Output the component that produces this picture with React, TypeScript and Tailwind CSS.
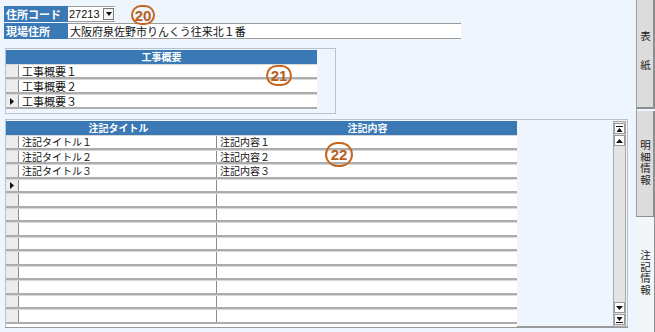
import type { ReactNode } from "react"

const jp = "font-['Noto_Sans_CJK_JP','Noto_Sans',sans-serif]"

function Marker({ on }: { on?: boolean }) {
  return (
    <div className="w-[13px] shrink-0 bg-[#ececec] border-r border-[#8c8c8c] flex items-center justify-center">
      {on && (
        <svg width="4" height="7" viewBox="0 0 4 7">
          <path d="M0 0 L4 3.5 L0 7 Z" fill="#111" />
        </svg>
      )}
    </div>
  )
}

function Circle({ n, className }: { n: string; className: string }) {
  return (
    <div
      className={`absolute flex items-center justify-center rounded-full border-[2.5px] border-[#c4661e] text-[#b85e1c] text-[15px] font-bold leading-none font-['Liberation_Sans',sans-serif] ${className}`}
    >
      {n}
    </div>
  )
}

function ScrollBtn({ children }: { children: ReactNode }) {
  return (
    <div className="h-[11px] w-[11px] mx-auto bg-white border border-[#9a9a9a] flex items-center justify-center">
      {children}
    </div>
  )
}

function Tab({ label, className, spacing }: { label: string; className: string; spacing: string }) {
  return (
    <div className={`flex items-center justify-center ${className}`}>
      <span className={`[writing-mode:vertical-rl] text-[10.5px] leading-[12px] text-[#222] ${spacing}`}>{label}</span>
    </div>
  )
}

export default function App() {
  const overview = ["工事概要１", "工事概要２", "工事概要３"]
  const notes = [
    ["注記タイトル１", "注記内容１"],
    ["注記タイトル２", "注記内容２"],
    ["注記タイトル３", "注記内容３"],
    ...Array.from({ length: 10 }, () => ["", ""]),
  ]

  return (
    <div className={`w-[655px] h-[332px] flex bg-[#eef5fc] overflow-hidden ${jp}`}>
      {/* main area */}
      <div className="relative w-[636px] h-[332px] pl-[4px] pt-[6px]">
        <div className="flex h-[16px]">
          <div className="w-[64px] bg-[#3b78b6] text-white text-[11px] font-bold leading-[16px] pl-[2px]">住所コード</div>
          <div className="w-[47px] bg-white border-y border-[#9c9c9c] flex items-center pl-[1px] text-[11px] text-[#111]">
            <span className="font-['Liberation_Sans',sans-serif] text-[11px]">27213</span>
            <div className="ml-auto mr-[1px] h-[12px] w-[11px] border border-[#777] bg-[#f4f4f4] flex items-center justify-center">
              <svg width="6" height="4" viewBox="0 0 6 4">
                <path d="M0 0 L6 0 L3 4 Z" fill="#111" />
              </svg>
            </div>
          </div>
        </div>
        <div className="flex h-[16px] mt-px">
          <div className="w-[64px] bg-[#3b78b6] text-white text-[11px] font-bold leading-[16px] pl-[2px]">現場住所</div>
          <div className="w-[393px] bg-white border-y border-[#9c9c9c] flex items-center pl-[2px] text-[#111]">
            <span className="text-[11px] leading-[12px]">大阪府泉佐野市りんくう往来北１番</span>
          </div>
        </div>

        {/* 工事概要 */}
        <div className="mt-[9px] ml-px w-[331px] h-[66px] border border-[#b9c3cc] pt-px">
          <div className="w-[311px] bg-white">
            <div className="h-[14px] bg-[#3b78b6] text-white text-[10px] font-bold leading-[14px] text-center">工事概要</div>
            {overview.map((t, i) => (
              <div key={i} className="flex h-[15px] border-b-2 border-[#adadad] border-t border-t-[#d8d8d8]">
                <Marker on={i === 2} />
                <div className="flex-1 text-[11px] leading-[12px] pl-[3px] text-[#111]">{t}</div>
              </div>
            ))}
          </div>
        </div>

        {/* 注記 */}
        <div className="mt-[5px] ml-px w-[623px] h-[209px] border border-[#b9c3cc] border-b-2 border-b-[#9a9a9a] pt-px flex">
          <div className="w-[511px] h-[206px] bg-white overflow-hidden">
            <div className="flex h-[14px] bg-[#3b78b6] text-white text-[10px] font-bold leading-[14px]">
              <div className="w-[13px]" />
              <div className="w-[199px] text-center">注記タイトル</div>
              <div className="flex-1 text-center">注記内容</div>
            </div>
            {notes.map(([a, b], i) => (
              <div key={i} className="flex h-[14.5px] border-b-2 border-[#adadad] border-t border-t-[#d8d8d8]">
                <Marker on={i === 3} />
                <div className="w-[198px] border-r border-[#8c8c8c] text-[10px] leading-[11px] pl-[3px] text-[#111]">{a}</div>
                <div className="flex-1 text-[10px] leading-[11px] pl-[3px] text-[#111]">{b}</div>
              </div>
            ))}
          </div>
          <div className="ml-auto mr-px w-[13px] h-[206px] bg-[#e4e4e4] border border-[#a8a8a8] flex flex-col justify-between py-px">
            <div className="flex flex-col gap-px">
              <ScrollBtn>
                <svg width="7" height="6" viewBox="0 0 7 6">
                  <path d="M0 0 H7 V1 H0 Z M3.5 2 L6.5 6 H0.5 Z" fill="#111" />
                </svg>
              </ScrollBtn>
              <ScrollBtn>
                <svg width="7" height="4" viewBox="0 0 7 4">
                  <path d="M3.5 0 L7 4 H0 Z" fill="#111" />
                </svg>
              </ScrollBtn>
            </div>
            <div className="flex flex-col gap-px">
              <ScrollBtn>
                <svg width="7" height="4" viewBox="0 0 7 4">
                  <path d="M0 0 H7 L3.5 4 Z" fill="#111" />
                </svg>
              </ScrollBtn>
              <ScrollBtn>
                <svg width="7" height="6" viewBox="0 0 7 6">
                  <path d="M0.5 0 H6.5 L3.5 4 Z M0 5 H7 V6 H0 Z" fill="#111" />
                </svg>
              </ScrollBtn>
            </div>
          </div>
        </div>

        <Circle n="20" className="left-[131px] top-[5px] w-[24px] h-[20px]" />
        <Circle n="21" className="left-[266px] top-[65px] w-[26px] h-[21px]" />
        <Circle n="22" className="left-[325px] top-[142px] w-[28px] h-[25px]" />
      </div>

      {/* tabs */}
      <div className="w-[19px] h-[332px] flex flex-col">
        <Tab label={"表\u3000紙"} spacing="tracking-[4px]" className="h-[109px] bg-[#dcdcdc] border-l border-l-[#a0a0a0] border-r-2 border-b-2 border-[#8e8e8e] pb-[2px]" />
        <div className="h-[2px] border-l border-[#a0a0a0]" />
        <Tab label="明細情報" spacing="tracking-[1px]" className="h-[106px] bg-[#dcdcdc] border-l border-l-[#a0a0a0] border-r-2 border-b border-[#8e8e8e] pb-[2px]" />
        <Tab label="注記情報" spacing="tracking-[1px]" className="flex-1 bg-[#f3f6f9] border-r border-[#8e8e8e] pb-[4px]" />
      </div>
    </div>
  )
}
